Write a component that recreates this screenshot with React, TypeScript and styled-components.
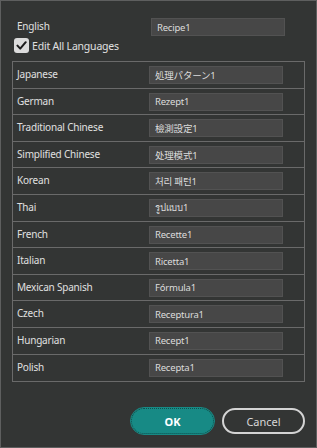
import React from "react";
import styled, { createGlobalStyle } from "styled-components";

const languages: { name: string; value: string }[] = [
  { name: "Japanese", value: "処理パターン1" },
  { name: "German", value: "Rezept1" },
  { name: "Traditional Chinese", value: "檢測設定1" },
  { name: "Simplified Chinese", value: "处理模式1" },
  { name: "Korean", value: "처리 패턴1" },
  { name: "Thai", value: "รูปแบบ1" },
  { name: "French", value: "Recette1" },
  { name: "Italian", value: "Ricetta1" },
  { name: "Mexican Spanish", value: "Fórmula1" },
  { name: "Czech", value: "Receptura1" },
  { name: "Hungarian", value: "Recept1" },
  { name: "Polish", value: "Recepta1" },
];

const App: React.FC = () => {
  return (
    <>
      <GlobalStyle />
      <Dialog>
        <EnglishRow>
          <Label>English</Label>
          <TextInput defaultValue="Recipe1" />
        </EnglishRow>
        <CheckRow>
          <Check>
            <svg width="11" height="11" viewBox="0 0 12 12">
              <path
                d="M1.6 6.2 L4.6 9.4 L10.6 2.4"
                fill="none"
                stroke="#1c1c1c"
                strokeWidth="2.2"
                strokeLinecap="round"
                strokeLinejoin="round"
              />
            </svg>
          </Check>
          <CheckText>Edit All Languages</CheckText>
        </CheckRow>
        <Table>
          {languages.map((l, i) => (
            <Row key={l.name} last={i === languages.length - 1}>
              <Label>{l.name}</Label>
              <TextInput defaultValue={l.value} />
            </Row>
          ))}
        </Table>
        <Footer>
          <OkButton>OK</OkButton>
          <CancelButton>Cancel</CancelButton>
        </Footer>
      </Dialog>
    </>
  );
};

export default App;

const GlobalStyle = createGlobalStyle`
  body {
    margin: 0;
    background: #333534;
    font-family: "Noto Sans", "Noto Sans CJK JP", "Noto Sans CJK KR", sans-serif;
  }
`;

const Dialog = styled.div`
  width: 317px;
  height: 448px;
  box-sizing: border-box;
  border: 1px solid #5e5f5f;
  background: #333534;
  padding: 16px 12px 0 11px;
  display: flex;
  flex-direction: column;
`;

const Label = styled.div`
  font-size: 10px;
  letter-spacing: -0.2px;
  line-height: 14px;
  color: #e0e0e0;
  padding-top: 5px;
  white-space: nowrap;
`;

const TextInput = styled.input`
  width: 134px;
  height: 18px;
  box-sizing: border-box;
  margin-top: 4px;
  padding: 0 5px;
  background: #474747;
  border: 1px solid #525252;
  color: #dcdcdc;
  font-family: inherit;
  font-size: 9.5px;
  letter-spacing: -0.2px;
  outline: none;
`;

const EnglishRow = styled.div`
  display: grid;
  grid-template-columns: 134px 134px;
  padding-left: 5px;
  margin-top: -3px;
  height: 23px;
  align-items: start;
`;

const CheckRow = styled.div`
  display: flex;
  align-items: center;
  gap: 3px;
  margin-top: 1px;
  padding-left: 2px;
  height: 15px;
`;

const Check = styled.div`
  width: 15px;
  height: 15px;
  box-sizing: border-box;
  border-radius: 3px;
  background: #dcdcdc;
  display: flex;
  align-items: center;
  justify-content: center;
`;

const CheckText = styled.span`
  font-size: 10.5px;
  letter-spacing: -0.2px;
  color: #e0e0e0;
`;

const Table = styled.div`
  margin-top: 8px;
  width: 293px;
  box-sizing: border-box;
  border: 1px solid #6a6a6a;
  display: flex;
  flex-direction: column;
`;

const Row = styled.div<{ last?: boolean }>`
  height: 26.6px;
  box-sizing: border-box;
  border-bottom: ${(p) => (p.last ? "none" : "1px solid #6a6a6a")};
  display: grid;
  grid-template-columns: 132px 134px;
  padding-left: 4px;
  align-items: start;
`;

const Footer = styled.div`
  display: flex;
  justify-content: flex-end;
  gap: 8px;
  margin-top: 26px;
  width: 293px;
`;

const Button = styled.button`
  width: 83px;
  height: 26px;
  box-sizing: border-box;
  border-radius: 13px;
  font-family: inherit;
  font-size: 11px;
  cursor: pointer;
`;

const OkButton = styled(Button)`
  background: #178a85;
  color: #ffffff;
  font-weight: 700;
  border: 1px dotted #0b4f4c;
  outline: 1px solid #178a85;
`;

const CancelButton = styled(Button)`
  background: transparent;
  color: #d8d8d8;
  border: 2px solid #d4d4d4;
`;
